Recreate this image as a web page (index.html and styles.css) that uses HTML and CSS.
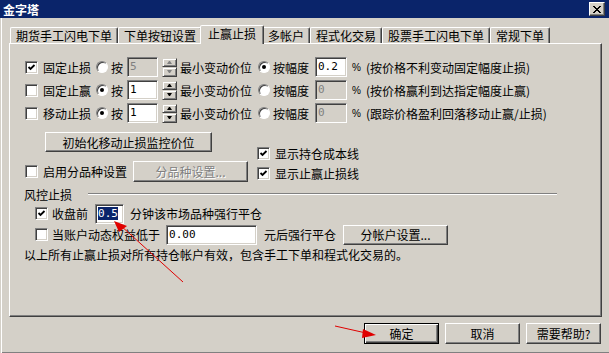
FILE: index.html
```html
<!DOCTYPE html>
<html>
<head>
    <meta charset="utf-8">
    <title>金字塔</title>
    <link rel="stylesheet" href="styles.css">
</head>
<body>
<div class="window">
    <div class="titlebar">
        <span class="title">金字塔</span>
        <span class="close-btn">
            <svg width="8" height="7" viewBox="0 0 8 7" shape-rendering="crispEdges">
                <path d="M0 0h2v1h1v1h2v-1h1v-1h2v1h-1v1h-1v1h-1v1h1v1h1v1h1v1h-2v-1h-1v-1h-2v1h-1v1h-2v-1h1v-1h1v-1h1v-1h-1v-1h-1v-1h-1z" fill="#000"/>
            </svg>
        </span>
    </div>

    <div class="tabs">
        <div class="tab">期货手工闪电下单</div>
        <div class="tab">下单按钮设置</div>
        <div class="tab active">止赢止损</div>
        <div class="tab">多帐户</div>
        <div class="tab">程式化交易</div>
        <div class="tab">股票手工闪电下单</div>
        <div class="tab">常规下单</div>
    </div>

    <div class="panel">
        <div class="stop-grid">
            <!-- 固定止损 -->
            <span class="check"><svg width="9" height="9" viewBox="0 0 9 9"><path d="M1.5 4 L3.5 6 L7.5 2" fill="none" stroke="#000" stroke-width="1.8"/></svg></span>
            <span>固定止损</span>
            <span class="radio"></span>
            <span>按</span>
            <span class="field off">5</span>
            <span class="spin off"><i class="up"></i><i class="down"></i></span>
            <span>最小变动价位</span>
            <span class="radio on"></span>
            <span>按幅度</span>
            <span class="field wide">0.2</span>
            <span class="pct">%</span>
            <span>(按价格不利变动固定幅度止损)</span>

            <!-- 固定止赢 -->
            <span class="check"></span>
            <span>固定止赢</span>
            <span class="radio on"></span>
            <span>按</span>
            <span class="field">1</span>
            <span class="spin"><i class="up"></i><i class="down"></i></span>
            <span>最小变动价位</span>
            <span class="radio"></span>
            <span>按幅度</span>
            <span class="field wide off">0</span>
            <span class="pct">%</span>
            <span>(按价格赢利到达指定幅度止赢)</span>

            <!-- 移动止损 -->
            <span class="check"></span>
            <span>移动止损</span>
            <span class="radio on"></span>
            <span>按</span>
            <span class="field">1</span>
            <span class="spin"><i class="up"></i><i class="down"></i></span>
            <span>最小变动价位</span>
            <span class="radio"></span>
            <span>按幅度</span>
            <span class="field wide off">0</span>
            <span class="pct">%</span>
            <span>(跟踪价格盈利回落移动止赢/止损)</span>
        </div>

        <div class="mid">
            <div class="mid-left">
                <button class="btn btn-init">初始化移动止损监控价位</button>
                <div class="line-row row-split">
                    <span class="check"></span>
                    <span class="lbl">启用分品种设置</span>
                    <button class="btn btn-split" disabled>分品种设置...</button>
                </div>
            </div>
            <div class="mid-right">
                <div class="line-row">
                    <span class="check"><svg width="9" height="9" viewBox="0 0 9 9"><path d="M1.5 4 L3.5 6 L7.5 2" fill="none" stroke="#000" stroke-width="1.8"/></svg></span>
                    <span class="lbl">显示持仓成本线</span>
                </div>
                <div class="line-row">
                    <span class="check"><svg width="9" height="9" viewBox="0 0 9 9"><path d="M1.5 4 L3.5 6 L7.5 2" fill="none" stroke="#000" stroke-width="1.8"/></svg></span>
                    <span class="lbl">显示止赢止损线</span>
                </div>
            </div>
        </div>

        <div class="group-head">
            <span>风控止损</span>
            <span class="etched"></span>
        </div>
        <div class="group-body">
            <div class="line-row">
                <span class="check"><svg width="9" height="9" viewBox="0 0 9 9"><path d="M1.5 4 L3.5 6 L7.5 2" fill="none" stroke="#000" stroke-width="1.8"/></svg></span>
                <span class="lbl-s">收盘前</span>
                <span class="field close-min"><span class="sel">0.5</span></span>
                <span class="after">分钟该市场品种强行平仓</span>
            </div>
            <div class="line-row">
                <span class="check"></span>
                <span class="lbl-s">当账户动态权益低于</span>
                <span class="field equity">0.00</span>
                <span class="after2">元后强行平仓</span>
                <button class="btn btn-acct">分帐户设置...</button>
            </div>
        </div>
        <div class="note">以上所有止赢止损对所有持仓帐户有效，包含手工下单和程式化交易的。</div>
    </div>

    <div class="footer">
        <button class="btn default">确定</button>
        <button class="btn">取消</button>
        <button class="btn">需要帮助?</button>
    </div>

    <svg class="marks" width="609" height="353">
        <line x1="183" y1="282" x2="120" y2="225" stroke="#e00000" stroke-width="1"/>
        <polygon points="114,221 127,226 119,232" fill="#e00000"/>
        <line x1="335" y1="326" x2="366" y2="333" stroke="#e00000" stroke-width="1"/>
        <polygon points="376,335 363,329 362,338" fill="#e00000"/>
    </svg>
</div>
</body>
</html>
```

FILE: styles.css
```css
body {
    margin: 0;
    background: #D4D0C8;
    font-family: "Noto Sans CJK SC", "Noto Sans", sans-serif;
    font-size: 12px;
    color: #000;
}

.window {
    position: relative;
    width: 609px;
    height: 353px;
    overflow: hidden;
    background: #D4D0C8;
    box-shadow: inset 1px 0 #D4D0C8, inset 2px 0 #fff, inset 0 -1px #808080;
}

/* title bar */
.titlebar {
    display: flex;
    align-items: center;
    justify-content: space-between;
    height: 18px;
    padding: 0 4px 0 3px;
    background: #0A246A;
    color: #fff;
    font-weight: bold;
}

.close-btn {
    display: flex;
    align-items: center;
    justify-content: center;
    width: 16px;
    height: 14px;
    box-sizing: border-box;
    background: #D4D0C8;
    border: 1px solid;
    border-color: #fff #404040 #404040 #fff;
    box-shadow: inset -1px -1px #808080;
}

/* tabs */
.tabs {
    position: relative;
    z-index: 1;
    display: flex;
    align-items: flex-end;
    height: 18px;
    margin-top: 7px;
    padding-left: 10px;
}

.tab {
    height: 16px;
    box-sizing: border-box;
    padding: 0 5px;
    line-height: 15px;
    white-space: nowrap;
    border: 1px solid;
    border-bottom: none;
    border-color: #fff #404040 transparent #fff;
    box-shadow: inset -1px 0 #808080;
    border-radius: 2px 2px 0 0;
}

.tab.active {
    position: relative;
    z-index: 2;
    height: 19px;
    margin: 0 -2px -1px;
    padding: 0 7px 2px;
    background: #D4D0C8;
}

/* page panel */
.panel {
    width: 593px;
    height: 274px;
    box-sizing: border-box;
    margin-left: 9px;
    padding: 13px 0 0 15px;
    border: 1px solid;
    border-color: #fff #404040 #404040 #fff;
    box-shadow: inset -1px -1px #808080;
}

.stop-grid {
    display: grid;
    grid-template-columns: 18px 53px 15px 16px 35px 18px 78px 15px 42px 37px 14px auto;
    grid-auto-rows: 20px;
    row-gap: 3px;
    align-items: center;
    white-space: nowrap;
}

/* controls */
.check {
    display: flex;
    align-items: center;
    justify-content: center;
    width: 13px;
    height: 13px;
    box-sizing: border-box;
    background: #fff;
    border: 1px solid;
    border-color: #808080 #fff #fff #808080;
    box-shadow: inset 1px 1px #404040, inset -1px -1px #D4D0C8;
}

.radio {
    position: relative;
    width: 12px;
    height: 12px;
    box-sizing: border-box;
    background: #fff;
    border-radius: 50%;
    border: 1px solid;
    border-color: #808080 #fff #fff #808080;
    box-shadow: inset 1px 1px #404040;
}

.radio.on::after {
    content: "";
    position: absolute;
    left: 3px;
    top: 3px;
    width: 4px;
    height: 4px;
    border-radius: 50%;
    background: #000;
}

.field {
    display: block;
    width: 31px;
    height: 20px;
    box-sizing: border-box;
    padding-left: 2px;
    background: #fff;
    font-family: "DejaVu Sans Mono", "Liberation Mono", monospace;
    font-size: 11px;
    line-height: 18px;
    border: 1px solid;
    border-color: #808080 #fff #fff #808080;
    box-shadow: inset 1px 1px #404040, inset -1px -1px #D4D0C8;
}

.field.wide {
    width: 32px;
}

.field.off {
    background: #D4D0C8;
    color: #808080;
}

.field .sel {
    background: #0A246A;
    color: #fff;
}

.pct {
    font-family: "Liberation Sans", sans-serif;
    font-size: 10px;
}

.spin {
    display: flex;
    flex-direction: column;
    width: 15px;
    height: 19px;
}

.spin i {
    flex: 1;
    display: flex;
    align-items: center;
    justify-content: center;
    box-sizing: border-box;
    border: 1px solid;
    border-color: #D4D0C8 #404040 #404040 #D4D0C8;
    box-shadow: inset 1px 1px #fff, inset -1px -1px #808080;
}

.spin i::after {
    content: "";
    width: 1px;
    height: 0;
    border-left: 2px solid transparent;
    border-right: 2px solid transparent;
}

.spin .up::after {
    border-bottom: 3px solid #000;
}

.spin .down::after {
    border-top: 3px solid #000;
}

.spin.off .up::after {
    border-bottom-color: #808080;
}

.spin.off .down::after {
    border-top-color: #808080;
}

.btn {
    height: 21px;
    box-sizing: border-box;
    padding: 0;
    font: inherit;
    color: #000;
    background: #D4D0C8;
    border: 1px solid;
    border-color: #fff #404040 #404040 #fff;
    border-radius: 0;
    box-shadow: inset -1px -1px #808080;
}

.btn[disabled] {
    color: #808080;
    text-shadow: 1px 1px #fff;
}

.btn.default {
    border-color: #000;
    box-shadow: inset 1px 1px #fff, inset -1px -1px #404040, inset -2px -2px #808080;
}

/* middle block */
.mid {
    display: flex;
    margin-top: 9px;
}

.mid-left {
    width: 232px;
}

.mid-right {
    padding-top: 11px;
}

.line-row {
    display: flex;
    align-items: center;
    height: 20px;
    white-space: nowrap;
}

.lbl {
    margin-left: 5px;
}

.btn-init {
    display: block;
    width: 167px;
    height: 20px;
    margin-left: 20px;
}

.row-split {
    margin-top: 9px;
    height: 21px;
}

.btn-split {
    width: 115px;
    margin-left: 6px;
}

/* risk group */
.group-head {
    display: flex;
    align-items: center;
    height: 14px;
    margin: 4px 0 0 -1px;
}

.etched {
    width: 469px;
    margin-left: 16px;
    border-top: 1px solid #808080;
    border-bottom: 1px solid #fff;
}

.group-body {
    margin-top: 2px;
    padding-left: 10px;
}

.group-body .line-row {
    height: 21px;
}

.lbl-s {
    margin-left: 4px;
}

.close-min {
    width: 29px;
    margin-left: 7px;
}

.after {
    margin-left: 6px;
}

.equity {
    width: 91px;
    margin-left: 6px;
}

.after2 {
    margin-left: 7px;
}

.btn-acct {
    width: 105px;
    height: 20px;
    margin-left: 7px;
}

.note {
    margin: 3px 0 0 -1px;
    line-height: 14px;
}

/* dialog buttons */
.footer {
    display: flex;
    justify-content: flex-end;
    gap: 6px;
    margin-top: 6px;
    padding-right: 8px;
}

.footer .btn {
    width: 75px;
}

.marks {
    position: absolute;
    left: 0;
    top: 0;
    pointer-events: none;
}
```
